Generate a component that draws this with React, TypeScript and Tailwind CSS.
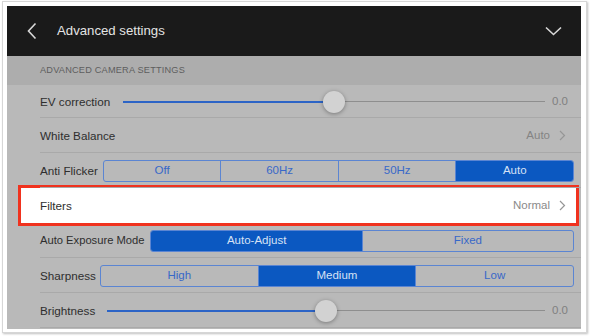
import React from 'react';

const font = { fontFamily: '"Liberation Sans", Arial, sans-serif' };

function Chevron() {
  return (
    <svg width="7" height="11" viewBox="0 0 7 11" className="ml-[9px]">
      <path d="M1 1 L5.5 5.5 L1 10" fill="none" stroke="#969696" strokeWidth="1.2" />
    </svg>
  );
}

function Row({ children, last, h = 'h-[35px]' }: { children: React.ReactNode; last?: boolean; h?: string }) {
  return (
    <div className={`relative ${h} flex items-center pl-[33px]`}>
      {children}
      {!last && <div className="absolute left-[33px] right-0 bottom-0 h-px bg-[#a9a9a9]" />}
    </div>
  );
}

function Segmented({ items, active }: { items: string[]; active: number }) {
  return (
    <div className="flex-1 flex h-[22px] border border-[#5b85d2] rounded-[3px] overflow-hidden">
      {items.map((t, i) => (
        <div
          key={t}
          className={`flex-1 flex items-center justify-center text-[11.5px] ${i > 0 ? 'border-l border-[#5b85d2]' : ''} ${i === active ? 'bg-[#0b58c1] text-[#d6e2f5]' : 'text-[#3868c8]'}`}
        >
          {t}
        </div>
      ))}
    </div>
  );
}

function Slider({ pos }: { pos: number }) {
  return (
    <div className="flex-1 relative h-[22px] flex items-center">
      <div className="w-full h-px bg-[#8e8e8e]" />
      <div className="absolute left-0 h-[2px] bg-[#2c64c6]" style={{ width: `${pos}px` }} />
      <div
        className="absolute w-[22px] h-[22px] rounded-full bg-[#d2d2d2] shadow-[0_1px_4px_rgba(0,0,0,0.35)]"
        style={{ left: `${pos - 11}px` }}
      />
    </div>
  );
}

const label = 'text-[11.7px] text-[#2e2e2e]';

export default function App() {
  return (
    <div className="w-[591px] h-[336px] bg-white" style={font}>
      <div className="ml-[2px] mt-[1px] w-[585px] h-[332px] border border-[#d6d6d6] shadow-[1px_1px_2px_rgba(0,0,0,0.25)] pl-[4px] pt-[4px]">
        <div className="w-[574px] h-[323px] bg-[#b9b9b9] overflow-hidden">
          {/* header */}
          <div className="h-[50px] bg-[#1a1a1a] flex items-center pl-[19px] pr-[19px]">
            <svg width="12" height="18" viewBox="0 0 12 18">
              <path d="M9.5 1.5 L2.5 9 L9.5 16.5" fill="none" stroke="#d8d8d8" strokeWidth="1.6" />
            </svg>
            <div className="ml-[19px] text-[13.2px] text-[#e4e4e4]">Advanced settings</div>
            <div className="flex-1" />
            <svg width="17" height="10" viewBox="0 0 17 10">
              <path d="M1 1.5 L8.5 8.5 L16 1.5" fill="none" stroke="#d8d8d8" strokeWidth="1.6" />
            </svg>
          </div>

          <div className="h-[29px] bg-[#adadad] flex items-center pl-[33px] text-[9.2px] tracking-[0.2px] text-[#5e5e5e]">
            ADVANCED CAMERA SETTINGS
          </div>

          <Row h="h-[33px]">
            <span className={label}>EV correction</span>
            <div className="flex-1 flex items-center ml-[13px] pr-[13px]">
              <Slider pos={211} />
              <span className="ml-[7px] text-[11.5px] text-[#808080]">0.0</span>
            </div>
          </Row>

          <Row>
            <span className={label}>White Balance</span>
            <div className="flex-1" />
            <span className="text-[11.5px] text-[#848484]">Auto</span>
            <div className="pr-[15px] flex items-center">
              <Chevron />
            </div>
          </Row>

          <Row>
            <span className={`${label} mr-[5px]`}>Anti Flicker</span>
            <div className="flex-1 flex pr-[7px]">
              <Segmented items={['Off', '60Hz', '50Hz', 'Auto']} active={3} />
            </div>
          </Row>

          <div className="h-[35px] pl-[11px] pr-[2px] flex">
            <div className="-my-[3px] flex-1 border-[3px] border-[#f0321e] bg-white flex items-center pl-[19px] pr-[10px]">
              <span className={label}>Filters</span>
              <div className="flex-1" />
              <span className="text-[11.5px] text-[#8a8a8a]">Normal</span>
              <Chevron />
            </div>
          </div>

          <Row>
            <span className="text-[11.2px] text-[#2e2e2e] mr-[6px]">Auto Exposure Mode</span>
            <div className="flex-1 flex pr-[7px]">
              <Segmented items={['Auto-Adjust', 'Fixed']} active={0} />
            </div>
          </Row>

          <Row>
            <span className={`${label} mr-[4px]`}>Sharpness</span>
            <div className="flex-1 flex pr-[7px]">
              <Segmented items={['High', 'Medium', 'Low']} active={1} />
            </div>
          </Row>

          <Row>
            <span className={label}>Brightness</span>
            <div className="flex-1 flex items-center ml-[12px] pr-[13px]">
              <Slider pos={219} />
              <span className="ml-[7px] text-[11.5px] text-[#808080]">0.0</span>
            </div>
          </Row>
        </div>
      </div>
    </div>
  );
}
